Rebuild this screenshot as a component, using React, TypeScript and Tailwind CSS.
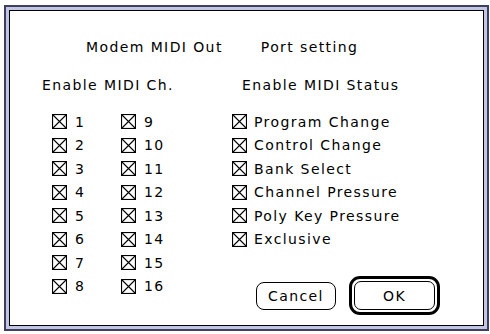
import React from 'react';

const font = { fontFamily: '"DejaVu Sans", "Liberation Sans", sans-serif' };

function XBox() {
  return (
    <svg width="15" height="15" viewBox="0 0 15 15" className="shrink-0">
      <rect x="0.5" y="0.5" width="14" height="14" fill="white" stroke="black" strokeWidth="1.2" />
      <path d="M1 1 L14 14 M14 1 L1 14" stroke="black" strokeWidth="1.1" />
    </svg>
  );
}

function Check({ label, gap = 'gap-[8px]' }: { label: string; gap?: string }) {
  return (
    <div className={`flex items-center h-[23.5px] ${gap}`}>
      <XBox />
      <span className="leading-4">{label}</span>
    </div>
  );
}

const status = [
  'Program Change',
  'Control Change',
  'Bank Select',
  'Channel Pressure',
  'Poly Key Pressure',
  'Exclusive',
];

export default function App() {
  const col1 = Array.from({ length: 8 }, (_, i) => String(i + 1));
  const col2 = Array.from({ length: 8 }, (_, i) => String(i + 9));

  return (
    <div className="w-[490px] h-[334px] bg-white pl-[4px] pt-[5px]" style={font}>
      <div className="w-[485px] h-[326px] border-2 border-[#3e3e5e] bg-[#c4c4e4] p-[3px]">
        <div className="w-full h-full border border-black bg-white pl-[42px] pt-[28px] text-[14px] tracking-[1.4px] text-black">
          {/* titles */}
          <div className="flex leading-4">
            <span className="ml-[34px]">Modem MIDI Out</span>
            <span className="ml-[38px]">Port setting</span>
          </div>
          <div className="flex leading-4 mt-[22px]">
            <span className="-ml-[10px] w-[200px]">Enable MIDI Ch.</span>
            <span>Enable MIDI Status</span>
          </div>

          <div className="flex mt-[17px]">
            <div className="w-[69px]">
              {col1.map(n => <Check key={n} label={n} />)}
            </div>
            <div className="w-[111px]">
              {col2.map(n => <Check key={n} label={n} />)}
            </div>
            <div>
              {status.map(s => <Check key={s} label={s} gap="gap-[7px]" />)}
              <div className="flex items-center mt-[25px] ml-[24px]">
                <div className="w-[80px] h-[28px] border border-black rounded-[8px] flex items-center justify-center leading-4">
                  Cancel
                </div>
                <div className="ml-[13px] w-[91px] h-[39px] border-[3px] border-black rounded-[11px] p-[2px]">
                  <div className="w-full h-full border border-black rounded-[7px] flex items-center justify-center leading-4">
                    OK
                  </div>
                </div>
              </div>
            </div>
          </div>
        </div>
      </div>
    </div>
  );
}
